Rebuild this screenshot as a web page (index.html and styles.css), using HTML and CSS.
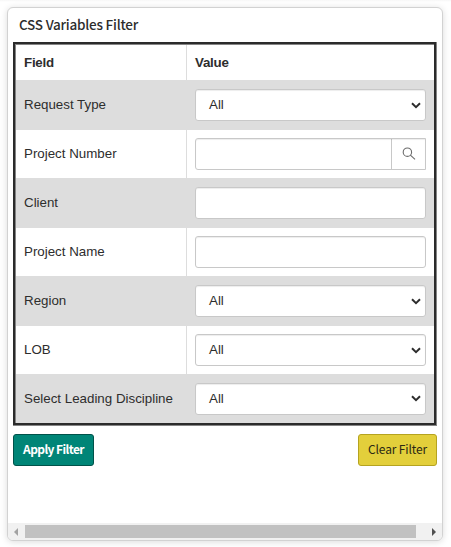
FILE: index.html
```html
<!DOCTYPE html>
<html lang="en">
<head>
<meta charset="utf-8">
<title>CSS Variables Filter</title>
<link rel="stylesheet" href="styles.css">
</head>
<body>
<section class="card">
  <h1 class="title"><span>CSS Variables Filter</span></h1>
  <div class="frame"><div class="frame-inner"><div class="table">
    <div class="row head"><div class="label"><span>Field</span></div><div class="value"><span>Value</span></div></div>
    <div class="row odd"><div class="label"><span>Request Type</span></div><div class="value"><div class="control select"><span>All</span><svg class="chevron" viewBox="0 0 10 7"><path d="M1 1.2 5 5.1 9 1.2"/></svg></div></div></div>
    <div class="row"><div class="label"><span>Project Number</span></div><div class="value"><div class="control search"><svg class="lens" viewBox="0 0 14 14"><circle cx="5.4" cy="5.2" r="4.2"/><path d="M8.4 8.2 13 12.4"/></svg></div></div></div>
    <div class="row odd"><div class="label"><span>Client</span></div><div class="value"><div class="control"></div></div></div>
    <div class="row"><div class="label"><span>Project Name</span></div><div class="value"><div class="control"></div></div></div>
    <div class="row odd"><div class="label"><span>Region</span></div><div class="value"><div class="control select"><span>All</span><svg class="chevron" viewBox="0 0 10 7"><path d="M1 1.2 5 5.1 9 1.2"/></svg></div></div></div>
    <div class="row"><div class="label"><span>LOB</span></div><div class="value"><div class="control select"><span>All</span><svg class="chevron" viewBox="0 0 10 7"><path d="M1 1.2 5 5.1 9 1.2"/></svg></div></div></div>
    <div class="row odd last"><div class="label"><span>Select Leading Discipline</span></div><div class="value"><div class="control select"><span>All</span><svg class="chevron" viewBox="0 0 10 7"><path d="M1 1.2 5 5.1 9 1.2"/></svg></div></div></div>
  </div></div></div>
  <div class="actions">
    <div class="button apply"><span>Apply Filter</span></div>
    <div class="button clear"><span>Clear Filter</span></div>
  </div>
  <div class="scrollbar">
    <svg class="arrow" viewBox="0 0 4 8"><path fill="#a3a3a3" d="M4 0v8L0 4z"/></svg>
    <div class="thumb"></div>
    <svg class="arrow" viewBox="0 0 4 8"><path fill="#505050" d="M0 0v8l4-4z"/></svg>
  </div>
</section>
</body>
</html>
```
FILE: styles.css
```css
* { box-sizing: border-box; }
body {
  margin: 0;
  height: 547px;
  padding: 7px 0 0 7px;
  overflow: hidden;
  background: linear-gradient(#f6f6f6, #fff 2px);
  font: 13.333px/20px "Liberation Sans", Arial, sans-serif;
  color: #2d2d2d;
}
.card {
  display: flex;
  flex-direction: column;
  width: 436px;
  height: 534px;
  border: 1px solid #d2d2d2;
  border-radius: 6px;
  overflow: hidden;
  background: #fff;
  box-shadow: 0 1px 7px rgba(0, 0, 0, 0.14);
}
.title {
  flex: none;
  margin: 0;
  height: 34px;
  padding: 6px 0 0 11px;
  font: 500 13.5px/20px "Noto Sans CJK SC", sans-serif;
  letter-spacing: -0.23px;
}
.frame {
  flex: none;
  width: 424px;
  height: 384px;
  margin-left: 5px;
  border: solid #858585;
  border-width: 0 1px 1px 0;
}
.frame-inner { border: 2px solid #2b2b2b; }
.table { border: solid #858585; border-width: 1px 0 0 1px; }
.row { display: flex; height: 48px; }
.row.head { height: 35px; font-weight: 700; letter-spacing: -0.25px; }
.row.odd { height: 50px; background: #ddd; }
.row.last { height: 49px; }
.label {
  display: flex;
  align-items: center;
  width: 171px;
  padding-left: 8px;
  border-right: 1px solid #ddd;
}
.value { display: flex; flex: 1; align-items: center; padding: 0 8px; }
.control {
  width: 231px;
  height: 32px;
  border: 1px solid #c8c8c8;
  border-radius: 3px;
  background: #fff;
  box-shadow: inset 0 1px 1px rgba(0, 0, 0, 0.075);
}
.select {
  display: flex;
  align-items: center;
  justify-content: space-between;
  padding: 0 4px 0 13px;
}
.chevron { width: 10px; height: 7px; fill: none; stroke: #2d2d2d; stroke-width: 2; }
.search {
  display: flex;
  align-items: center;
  padding-left: 206px;
  border-radius: 3px 0 0 3px;
  background: linear-gradient(#c8c8c8, #c8c8c8) 195px 0 / 1px 100% no-repeat, #fff;
}
.lens { width: 14px; height: 14px; fill: none; stroke: #6b6b6b; stroke-width: 1.1; }
.actions {
  display: flex;
  justify-content: space-between;
  width: 424px;
  margin: 8px 0 0 5px;
}
.button {
  display: flex;
  align-items: center;
  justify-content: center;
  height: 32px;
  padding-bottom: 2px;
  border: 1px solid;
  border-radius: 3px;
  font: 12px/20px "Noto Sans CJK SC", sans-serif;
  white-space: nowrap;
}
.apply { width: 81px; background: #008577; border-color: #00524a; color: #fff; font-weight: 700; letter-spacing: -0.6px; }
.clear { width: 79px; background: #e3cf3b; border-color: #b5a320; color: #2b2814; font-weight: 400; letter-spacing: -0.15px; }
.scrollbar {
  display: flex;
  flex: none;
  align-items: center;
  height: 17px;
  margin-top: auto;
  padding-left: 6px;
  background: #f1f1f1;
}
.arrow { flex: none; width: 4px; height: 8px; }
.thumb { flex: none; width: 391px; height: 13px; margin: 0 16px 0 7px; background: #c1c1c1; }
```
